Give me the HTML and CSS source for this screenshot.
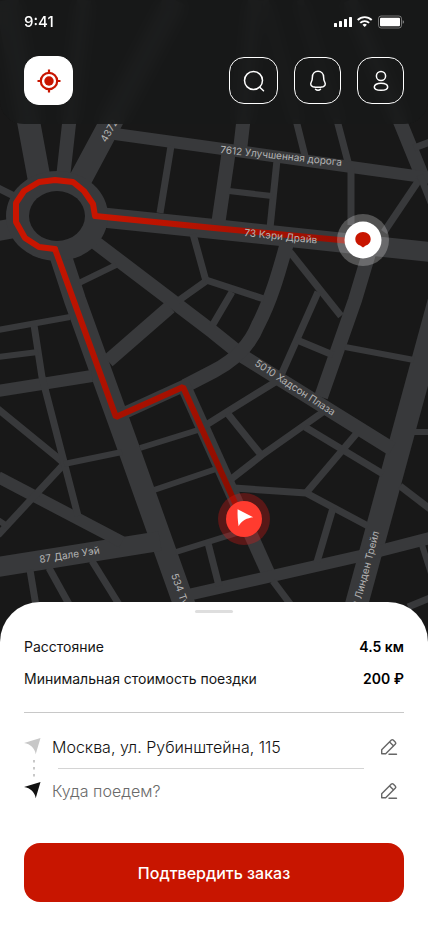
FILE: index.html
```html
<!DOCTYPE html>
<html lang="ru">
<head>
<meta charset="utf-8">
<meta name="viewport" content="width=device-width, initial-scale=1">
<title>Заказ такси</title>
<link rel="stylesheet" href="styles.css">
</head>
<body>
<div class="app">
  <svg class="map" viewBox="0 0 428 926" preserveAspectRatio="xMidYMin slice" aria-hidden="true">
    <defs>
      <linearGradient id="east" gradientUnits="userSpaceOnUse" x1="95" y1="216" x2="350" y2="242">
        <stop offset="0" stop-color="#c81500"/><stop offset="1" stop-color="#960e02"/>
      </linearGradient>
      <linearGradient id="south" gradientUnits="userSpaceOnUse" x1="55" y1="249" x2="240" y2="512">
        <stop offset="0" stop-color="#c51400"/><stop offset="0.6" stop-color="#a51000"/><stop offset="1" stop-color="#850d00"/>
      </linearGradient>
    </defs>
    <g class="roads">
      <g stroke-width="23">
        <path d="M7 0L29 124L39 178"/>
        <path d="M175 0L110 124L80 180"/>
        <path d="M449 265L355 610"/>
      </g>
      <g stroke-width="22">
        <path d="M60 254L75 300L131 455L188 615"/>
      </g>
      <g stroke-width="20">
        <path d="M98 217L214 229L430 252"/>
        <path d="M-2 231L15 228"/>
        <path d="M-2 567L160 541"/>
      </g>
      <g stroke-width="14">
        <path d="M84 0L69 124L63 178"/>
        <path d="M255 0L243 124L240 150"/>
        <path d="M229 150L218 225"/>
        <path d="M350 0L401 124L423 178"/>
        <path d="M92 240L213 332L244 357L392 449"/>
        <path d="M108 361L170 307"/>
        <path d="M287 243C278 275 271 300 258 325C250 345 235 360 214 371L185 386"/>
        <path d="M370 250L355 300L321 397"/>
        <path d="M185 388L269 575"/>
      </g>
      <g stroke-width="12">
        <path d="M190 383L122 414"/>
        <path d="M108 133L430 178"/>
        <path d="M188 595L360 556L430 538"/>
        <path d="M-2 477L122 542"/>
        <path d="M-2 391L92 376"/>
      </g>
      <g stroke-width="7">
        <path d="M171 146L160 213"/>
        <path d="M277 160L270 228"/>
        <path d="M265 0L297 124L306 160"/>
        <path d="M300 0L338 124L348 162"/>
        <path d="M414 148L430 142"/>
        <path d="M419 180L384 232"/>
        <path d="M420 175L434 210"/>
        <path d="M351 168V225"/>
        <path d="M-2 188L14 196"/>
        <path d="M193 234L206 281L178 301"/>
        <path d="M206 280L264 299"/>
        <path d="M232 292L212 326"/>
        <path d="M290 252L341 316"/>
        <path d="M318 292L282 373"/>
        <path d="M297 340L333 355"/>
        <path d="M277 381L230 410L203 427"/>
        <path d="M228 414L262 456"/>
        <path d="M323 412L262 455L230 480"/>
        <path d="M305 427L383 474"/>
        <path d="M357 433L306 493"/>
        <path d="M234 488L306 493L368 526"/>
        <path d="M333 508L317 562"/>
        <path d="M400 486L430 509"/>
        <path d="M273 581L291 605"/>
        <path d="M208 543L219 586"/>
        <path d="M65 463L-2 535"/>
        <path d="M-2 409L58 458L66 465"/>
        <path d="M34 325L42 377L64 462L78 516"/>
        <path d="M30 570L36 606"/>
        <path d="M49 568L70 606"/>
        <path d="M92 561L120 606"/>
        <path d="M408 607L430 598"/>
      </g>
      <g stroke-width="6">
        <path d="M229 191L272 196"/>
        <path d="M79 283L116 265"/>
        <path d="M345 347L414 360"/>
        <path d="M414 432H430"/>
        <path d="M140 448L198 430"/>
        <path d="M154 490L222 467"/>
        <path d="M176 552L240 532"/>
        <path d="M-2 330L70 317"/>
        <path d="M-2 357L38 352"/>
        <path d="M64 464L122 452"/>
        <path d="M-2 520L7 526"/>
        <path d="M422 545L433 580"/>
      </g>
    </g>
    <ellipse cx="57" cy="216" rx="51" ry="45" fill="#38393b"/>
    <ellipse cx="57" cy="216" rx="28" ry="25" fill="#181818"/>
    <g fill="none" stroke-width="6">
      <path stroke="url(#east)" d="M95 216L214 228L350 241"/>
      <path stroke="url(#south)" stroke-linejoin="bevel" d="M55 249L116 417L183 387L240 514"/>
      <path stroke="#c81500" stroke-linejoin="bevel" stroke-linecap="round" d="M55 249L39 247L25 238L16 222V203L24 191L39 182L55 180L73 182L84 191L93 204L95 216"/>
    </g>
    <g class="street">
      <text transform="translate(106 143) rotate(-60)">4372</text>
      <text transform="translate(220 153) rotate(6)">7612 Улучшенная дорога</text>
      <text transform="translate(244 236) rotate(6)">73 Кэри Драйв</text>
      <text transform="translate(254 365) rotate(33)">5010 Хадсон Плаза</text>
      <text transform="translate(40 563) rotate(-9)">87 Дале Уэй</text>
      <text transform="translate(171 575) rotate(70)">534 Тулип</text>
      <text transform="translate(359 608) rotate(-75)">2 Линден Трейл</text>
    </g>
    <circle cx="363" cy="240" r="26" fill="#fff" fill-opacity=".25"/>
    <circle cx="363" cy="240" r="18.500" fill="#fff"/>
    <path fill="#c81500" d="M363 232c4.200 0 7.700 3.100 7.700 7.200 0 3.300-2.200 5.400-4.900 6.400L363 247.600l-2.800-2c-2.700-1-4.900-3.100-4.900-6.400 0-4.100 3.500-7.200 7.700-7.200z"/>
    <circle cx="244" cy="519" r="26" fill="#e01a16" fill-opacity=".32"/>
    <circle cx="244" cy="519" r="18" fill="#ff3b2f"/>
    <path fill="#fff" d="M237.600 509.200L253.200 517.300C247.500 518 241.500 520.500 238.600 526.200C237.700 520.500 237.400 515 237.600 509.200z"/>
  </svg>

  <header class="top">
    <div class="status">
      <span class="clock">9:41</span>
      <svg class="signals" width="72" height="14" viewBox="0 0 72 14" aria-hidden="true">
        <g fill="#fff">
          <rect x="2" y="8" width="3" height="4" rx=".6"/><rect x="7" y="6" width="3" height="6" rx=".6"/>
          <rect x="12" y="4" width="3" height="8" rx=".6"/><rect x="17" y="2" width="3" height="10" rx=".6"/>
          <path d="M32.700 12l2.200-2.300a3.200 3.200 0 0 0-4.400 0z"/>
          <rect x="48" y="2.800" width="20" height="8.400" rx="1"/>
          <path d="M70.700 5.200c.9.300 1.300 1 1.300 1.800s-.4 1.500-1.300 1.800z" opacity=".45"/>
        </g>
        <g fill="none" stroke="#fff" stroke-width="1.900">
          <path d="M25.700 5a10 10 0 0 1 14 0M28.300 7.900a6.300 6.300 0 0 1 8.800 0"/>
        </g>
        <rect x="46.500" y="1" width="23" height="12" rx="2.600" fill="none" stroke="#fff" stroke-opacity=".4"/>
      </svg>
    </div>
    <nav class="tools">
      <button class="tool locate" type="button" aria-label="Моё местоположение">
        <svg width="24" height="24" viewBox="0 0 24 24" fill="none" stroke="#c81500" stroke-width="2.200">
          <circle cx="12" cy="12" r="8.200"/><circle cx="12" cy="12" r="4.700" fill="#c81500" stroke="none"/>
          <path d="M12 .5v3.500M12 20v3.500M.5 12H4M20 12h3.500"/>
        </svg>
      </button>
      <button class="tool wide" type="button" aria-label="Поиск">
        <svg width="24" height="24" viewBox="0 0 24 24" fill="none" stroke="#fff" stroke-width="1.500" stroke-linecap="round">
          <circle cx="11.500" cy="11.500" r="9"/><path d="M18 18.500l3.500 3.200"/>
        </svg>
      </button>
      <button class="tool" type="button" aria-label="Уведомления">
        <svg width="24" height="24" viewBox="0 0 24 24" fill="none" stroke="#fff" stroke-width="1.500" stroke-linecap="round" stroke-linejoin="round">
          <path d="M12 2.300C8.500 2.300 6.500 5 6.400 8c0 2.500-.3 3.600-1.100 5-1.200 2.200-.4 4.100 1.700 4.700 3.300.8 6.700.8 10 0 2.100-.6 2.900-2.500 1.700-4.700-.8-1.400-1.100-2.500-1.100-5C17.500 5 15.500 2.300 12 2.300z"/>
          <path d="M9.500 20.300c1.300 1.400 3.700 1.400 5 0"/>
        </svg>
      </button>
      <button class="tool" type="button" aria-label="Профиль">
        <svg width="24" height="24" viewBox="0 0 24 24" fill="none" stroke="#fff" stroke-width="1.500">
          <circle cx="12" cy="7" r="4.600"/><path d="M12 14.200c3.900 0 6.700 1.500 6.700 3.800S16.500 21.300 12 21.300 5.300 20.300 5.300 18s2.800-3.800 6.700-3.800z"/>
        </svg>
      </button>
    </nav>
  </header>

  <main class="sheet">
    <div class="handle"></div>
    <dl class="summary">
      <div class="line"><dt>Расстояние</dt><dd>4.5 км</dd></div>
      <div class="line"><dt>Минимальная стоимость поездки</dt><dd>200 ₽</dd></div>
    </dl>
    <form class="route">
      <svg class="track" width="18" height="62" viewBox="0 0 18 62" aria-hidden="true">
        <path fill="#c8c8c8" d="M0 5L16.500 0L11.700 16.200C11 10.500 6.500 6 0 5z"/>
        <path stroke="#c8c8c8" stroke-width="2" stroke-dasharray="2.500 4.500" d="M10 22v17"/>
        <path fill="#111" d="M0 49L16.500 44L11.700 60.200C11 54.500 6.500 50 0 49z"/>
      </svg>
      <div class="fields">
        <div class="field">
          <input type="text" aria-label="Откуда" value="Москва, ул. Рубинштейна, 115">
        </div>
        <div class="field">
          <input type="text" aria-label="Куда" placeholder="Куда поедем?">
        </div>
      </div>
      <div class="edits">
        <button class="edit" type="button" aria-label="Изменить адрес отправления">
          <svg width="18" height="18" viewBox="0 0 18 18" fill="none" stroke="#666" stroke-width="1.400" stroke-linecap="round" stroke-linejoin="round"><path d="M1.700 11.800L11.400 2.100a1.300 1.300 0 0 1 1.800 0l2.200 2.200a1.300 1.300 0 0 1 0 1.800L5.700 15.800H1.700zM9.600 3.900l4 4M9 16.200h7.500"/></svg>
        </button>
        <button class="edit" type="button" aria-label="Изменить адрес назначения">
          <svg width="18" height="18" viewBox="0 0 18 18" fill="none" stroke="#666" stroke-width="1.400" stroke-linecap="round" stroke-linejoin="round"><path d="M1.700 11.800L11.400 2.100a1.300 1.300 0 0 1 1.800 0l2.200 2.200a1.300 1.300 0 0 1 0 1.800L5.700 15.800H1.700zM9.600 3.900l4 4M9 16.200h7.500"/></svg>
        </button>
      </div>
      <button class="confirm" type="submit">Подтвердить заказ</button>
    </form>
  </main>
</div>
</body>
</html>
```
FILE: styles.css
```css
* { box-sizing: border-box; }

body {
  margin: 0;
  background: #181818;
  color: #141414;
  font-family: Inter, "Noto Sans", sans-serif;
}

button, input { font: inherit; }

.app {
  position: relative;
  display: flex;
  flex-direction: column;
  justify-content: space-between;
  min-height: 100vh;
  overflow: hidden;
}

.map {
  position: absolute;
  inset: 0;
  width: 100%;
  height: 100%;
}

.roads { fill: none; stroke: #38393b; }

.street {
  fill: #b4b4b4;
  font-size: 10px;
}

.top {
  position: relative;
  padding: 12px 24px 19px;
  border-radius: 0 0 24px 24px;
  background: rgba(23, 24, 24, 0.86);
  backdrop-filter: blur(6px);
}

.status {
  display: flex;
  align-items: center;
  justify-content: space-between;
  height: 20px;
  margin-bottom: 24px;
  color: #fff;
  font-size: 15px;
  font-weight: 500;
  line-height: 20px;
}

.tools {
  display: flex;
  align-items: center;
  gap: 16px;
}

.tool {
  display: flex;
  align-items: center;
  justify-content: center;
  width: 47px;
  height: 47px;
  padding: 0;
  border: 1px solid #fff;
  border-radius: 15px;
  background: none;
}

.wide { width: 49px; }

.locate {
  width: 49px;
  height: 49px;
  margin-right: auto;
  background: #fff;
}

.sheet {
  position: relative;
  padding: 8px 24px 24px;
  border-radius: 40px 40px 0 0;
  background: #fff;
}

.handle {
  width: 38px;
  height: 3px;
  margin: 0 auto 24px;
  border-radius: 2px;
  background: #dedede;
}

.summary {
  display: grid;
  gap: 12px;
  margin: 0;
  padding-bottom: 23px;
  border-bottom: 1px solid #c8c8c8;
  font-size: 14px;
  line-height: 20px;
}

.line {
  display: flex;
  justify-content: space-between;
}

.line dd {
  margin: 0;
  color: #000;
  font-weight: 600;
}

.route {
  display: grid;
  grid-template-columns: 18px 1fr 24px;
  column-gap: 10px;
  padding-top: 12px;
}

.track { align-self: center; }

.field {
  display: flex;
  height: 44px;
}

.field:first-of-type {
  margin-right: 6px;
  background: linear-gradient(#d4d4d4, #d4d4d4) 6px 100% / 100% 1px no-repeat;
}

.field input {
  width: 100%;
  min-width: 0;
  padding: 0;
  border: 0;
  outline: 0;
  background: none;
  color: #111;
  font-size: 16px;
  font-weight: 300;
}

.field input::placeholder { color: #6a6a6a; opacity: 1; }

.edits {
  display: grid;
  grid-template-rows: 44px 44px;
}

.edit {
  display: flex;
  align-items: center;
  padding: 0;
  border: 0;
  background: none;
}

.confirm {
  grid-column: 1 / -1;
  height: 59px;
  margin-top: 30px;
  border: 0;
  border-radius: 16px;
  background: #c81500;
  color: #fff;
  font-size: 16px;
  font-weight: 500;
}
```
